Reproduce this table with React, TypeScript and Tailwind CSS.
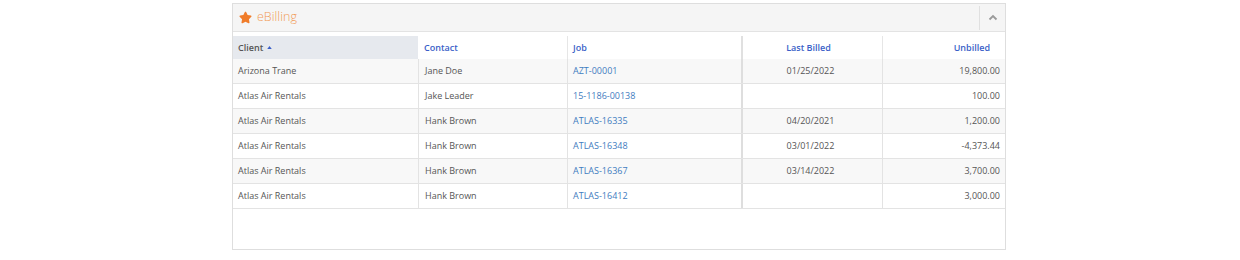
import { FaStar } from 'react-icons/fa'

const rows = [
  { client: 'Arizona Trane', contact: 'Jane Doe', job: 'AZT-00001', billed: '01/25/2022', unbilled: '19,800.00' },
  { client: 'Atlas Air Rentals', contact: 'Jake Leader', job: '15-1186-00138', billed: '', unbilled: '100.00' },
  { client: 'Atlas Air Rentals', contact: 'Hank Brown', job: 'ATLAS-16335', billed: '04/20/2021', unbilled: '1,200.00' },
  { client: 'Atlas Air Rentals', contact: 'Hank Brown', job: 'ATLAS-16348', billed: '03/01/2022', unbilled: '-4,373.44' },
  { client: 'Atlas Air Rentals', contact: 'Hank Brown', job: 'ATLAS-16367', billed: '03/14/2022', unbilled: '3,700.00' },
  { client: 'Atlas Air Rentals', contact: 'Hank Brown', job: 'ATLAS-16412', billed: '', unbilled: '3,000.00' },
]

function ChevronUp() {
  return (
    <svg width="10" height="7" viewBox="0 0 10 7" fill="none">
      <path d="M1.5 5.5 L5 2 L8.5 5.5" stroke="#9a9a9a" strokeWidth="1.8" />
    </svg>
  )
}

export default function App() {
  return (
    <div className="min-h-[260px] bg-white pt-[3px] font-['Open_Sans',sans-serif]">
      <div className="ml-[232px] flex h-[247px] w-[774px] flex-col border border-[#dedede] bg-white">
        {/* panel header */}
        <div className="flex h-[28px] items-center border-b border-[#e3e3e3] bg-[#f5f5f5]">
          <FaStar className="ml-[6px] text-[13px] text-[#f07c2a]" />
          <span className="ml-[5px] text-[12.5px] font-light text-[#f29b55]">eBilling</span>
          <div className="ml-auto flex h-[24px] w-[26px] items-center justify-center border-l border-[#e0e0e0]">
            <ChevronUp />
          </div>
        </div>

        <div className="mt-[4px] text-[9px] text-[#555]">
          {/* column headers */}
          <div className="flex h-[23px] font-semibold text-[#3a5fc8]">
            <div className="flex w-[185px] items-center gap-[4px] bg-[#e6e9ee] pl-[5px] text-[#555]">
              Client
              <svg width="5" height="3" viewBox="0 0 6 4"><path d="M0 4 L3 0 L6 4Z" fill="#3a5fc8" /></svg>
            </div>
            <div className="flex w-[149px] items-center pl-[6px]">Contact</div>
            <div className="flex w-[174px] items-center border-l border-[#e6e6e6] pl-[5px]">Job</div>
            <div className="flex w-[141px] items-center justify-center border-l-2 border-[#e0e0e0] pr-[8px]">Last Billed</div>
            <div className="flex w-[123px] items-center justify-end border-l border-[#e6e6e6] pr-[15px]">Unbilled</div>
          </div>

          {/* rows */}
          {rows.map((r, i) => (
            <div
              key={i}
              className={`flex h-[25px] border-b border-[#e3e3e3] ${i % 2 === 0 ? 'bg-[#f8f8f8]' : 'bg-white'}`}
            >
              <div className="flex w-[185px] items-center pl-[5px]">{r.client}</div>
              <div className="flex w-[149px] items-center border-l border-[#e3e3e3] pl-[6px]">{r.contact}</div>
              <div className="flex w-[174px] items-center border-l border-[#e3e3e3] pl-[5px] text-[#3f7cc0]">{r.job}</div>
              <div className="flex w-[141px] items-center justify-center border-l-2 border-[#dedede] pr-[4px]">{r.billed}</div>
              <div className="flex w-[123px] items-center justify-end border-l border-[#e3e3e3] pr-[5px]">{r.unbilled}</div>
            </div>
          ))}
        </div>
      </div>
    </div>
  )
}
